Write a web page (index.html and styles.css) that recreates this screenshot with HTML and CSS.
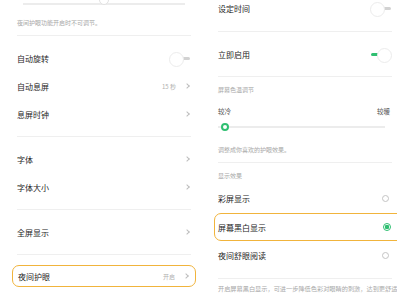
FILE: index.html
```html
<!DOCTYPE html>
<html lang="zh-CN">
<head>
  <meta charset="UTF-8">
  <meta name="viewport" content="width=device-width, initial-scale=1.0">
  <title>显示与亮度 / 夜间护眼</title>
  <link rel="stylesheet" href="styles.css">
</head>
<body>
  <div class="screens">
    <!-- 显示与亮度 -->
    <section class="panel left">
      <div class="brightness">
        <div class="track"><span class="track-knob"></span></div>
        <p class="caption">夜间护眼功能开启时不可调节。</p>
      </div>

      <div class="group">
        <div class="row"><span>自动旋转</span><span class="switch"></span></div>
        <div class="row"><span>自动息屏</span><span class="value">15 秒<i class="chev"></i></span></div>
        <div class="row"><span>息屏时钟</span><i class="chev"></i></div>
      </div>

      <div class="group">
        <div class="row"><span>字体</span><i class="chev"></i></div>
        <div class="row"><span>字体大小</span><i class="chev"></i></div>
      </div>

      <div class="group">
        <div class="row"><span>全屏显示</span><i class="chev"></i></div>
      </div>

      <div class="row highlight night">
        <span>夜间护眼</span><span class="value">开启<i class="chev"></i></span>
      </div>
    </section>

    <!-- 夜间护眼 -->
    <section class="panel right">
      <div class="group first">
        <div class="row"><span>设定时间</span><span class="switch"></span></div>
      </div>

      <div class="group">
        <div class="row"><span>立即启用</span><span class="switch on"></span></div>
      </div>

      <div class="group temp">
        <p class="caption">屏幕色温调节</p>
        <div class="temp-labels"><span>较冷</span><span>较暖</span></div>
        <div class="temp-slider"><div class="track"><span class="track-knob green"></span></div></div>
        <p class="caption hint">调整成你喜欢的护眼效果。</p>
      </div>

      <div class="group effects">
        <p class="caption">显示效果</p>
        <div class="row"><span>彩屏显示</span><span class="radio"></span></div>
        <div class="row highlight mono"><span>屏幕黑白显示</span><span class="radio checked"></span></div>
        <div class="row"><span>夜间舒眼阅读</span><span class="radio"></span></div>
      </div>

      <p class="caption footer">开启屏幕黑白显示，可进一步降低色彩对眼睛的刺激，达到更舒适</p>
    </section>
  </div>
</body>
</html>
```

FILE: styles.css
```css
/* Geral */
* {
  margin: 0;
  padding: 0;
  box-sizing: border-box;
}

html, body {
  width: 397px;
  height: 295px;
  overflow: hidden;
  background: #fff;
}

body {
  font-family: "Noto Sans CJK SC", "Noto Sans", sans-serif;
  color: #262626;
}

.screens {
  display: flex;
  height: 295px;
}

.panel {
  display: flex;
  flex-direction: column;
  flex: none;
}

.panel.left {
  width: 197px;
  padding: 0 6px 0 17px;
}

.panel.right {
  width: 200px;
  padding: 0 5px 0 21px;
}

/* Textos pequenos */
.caption {
  font-size: 6px;
  line-height: 10px;
  color: #a8a8a8;
  white-space: nowrap;
}

/* Grupos e linhas */
.group {
  padding: 8px 0;
  border-bottom: 1px solid #efefef;
}

.row {
  display: flex;
  justify-content: space-between;
  align-items: center;
  height: 28px;
  font-size: 8px;
}

.value {
  display: flex;
  align-items: center;
  gap: 9px;
  font-size: 6px;
  color: #b0b0b0;
}

.chev {
  display: block;
  width: 4px;
  height: 4px;
  margin-right: 2px;
  border-top: 1px solid #bdbdbd;
  border-right: 1px solid #bdbdbd;
  transform: rotate(45deg);
}

/* Destaque laranja */
.highlight {
  border: 1.5px solid #f1b43c;
  border-radius: 7px;
}

.night {
  height: 22px;
  margin: 10px -5px 0 -5px;
  padding: 0 5px;
}

.mono {
  margin: 1px -12px 0 -4px;
  padding: 0 10px 0 3px;
}

/* Slider */
.brightness {
  padding: 3px 0 7px;
  border-bottom: 1px solid #efefef;
}

.brightness .track {
  margin: 0 6px;
}

.brightness .caption {
  margin-top: 13px;
}

.track {
  position: relative;
  height: 2px;
  background: #ececec;
}

.track-knob {
  position: absolute;
  left: 76px;
  top: -8px;
  width: 10px;
  height: 10px;
  border-radius: 50%;
  background: #fff;
  border: 1px solid #e2e2e2;
}

.track-knob.green {
  left: 3px;
  top: -3px;
  width: 8px;
  height: 8px;
  border: 2px solid #2fbf71;
}

/* Switch */
.switch {
  position: relative;
  width: 22px;
  height: 13px;
}

.switch::before {
  content: "";
  position: absolute;
  left: 1px;
  right: 1px;
  top: 5px;
  height: 3px;
  border-radius: 2px;
  background: #d2d2d2;
}

.switch::after {
  content: "";
  position: absolute;
  left: 0;
  top: 0;
  width: 13px;
  height: 13px;
  border-radius: 50%;
  background: #fff;
  border: 1px solid #ececec;
}

.switch.on::before {
  background: #2fbf71;
}

.switch.on::after {
  left: auto;
  right: 0;
}

/* Painel direito */
.group.first {
  margin-top: -6px;
  padding-top: 0;
  padding-bottom: 9px;
}

.group.temp {
  padding: 8px 0 7px;
}

.temp-labels {
  display: flex;
  justify-content: space-between;
  margin-top: 11px;
  padding-right: 2px;
  font-size: 6.5px;
  line-height: 10px;
  color: #555;
}

.temp-slider {
  display: flex;
  align-items: center;
  height: 10px;
  margin-top: 6px;
  padding-right: 7px;
}

.temp-slider .track {
  flex: 1;
}

.hint {
  margin-top: 13px;
}

.group.effects {
  padding: 8px 0 9px;
}

.effects .caption {
  margin-bottom: 3px;
}

.radio {
  width: 7px;
  height: 7px;
  margin-right: 3px;
  border-radius: 50%;
  border: 1px solid #c4c4c4;
}

.radio.checked {
  width: 8px;
  height: 8px;
  margin-right: 2px;
  border-color: #2fbf71;
  background: radial-gradient(circle, #2fbf71 0 2px, #fff 2.5px);
}

.footer {
  padding-top: 5px;
  font-size: 6.2px;
  line-height: 10px;
}
```
